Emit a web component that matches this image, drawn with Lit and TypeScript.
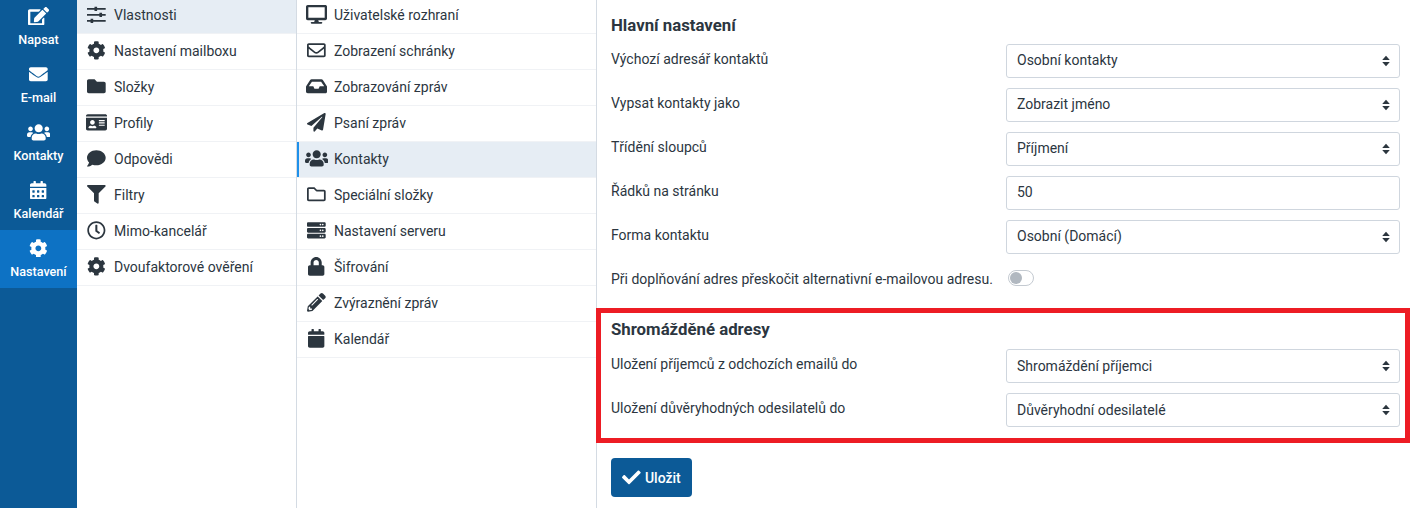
import { LitElement, html, css, svg } from "lit";
import { customElement } from "lit/decorators.js";

type Ic = { w: number; d: string };
const I: Record<string, Ic> = {
  edit: { w: 576, d: "M402.6 83.2l90.2 90.2c3.8 3.8 3.8 10 0 13.8L274.4 405.6l-92.8 10.3c-12.4 1.4-22.9-9.1-21.5-21.5l10.3-92.8L388.8 83.2c3.8-3.8 10-3.8 13.8 0zm162-22.9l-48.8-48.8c-15.2-15.2-39.9-15.2-55.2 0l-35.4 35.4c-3.8 3.8-3.8 10 0 13.8l90.2 90.2c3.8 3.8 10 3.8 13.8 0l35.4-35.4c15.2-15.3 15.2-40 0-55.2zM384 346.2V448H64V128h229.8c3.2 0 6.2-1.3 8.5-3.5l40-40c7.6-7.6 2.2-20.5-8.5-20.5H48C21.5 64 0 85.5 0 112v352c0 26.5 21.5 48 48 48h352c26.5 0 48-21.5 48-48V306.2c0-10.7-12.9-16-20.5-8.5l-40 40c-2.2 2.3-3.5 5.3-3.5 8.5z" },
  envelope: { w: 512, d: "M502.3 190.8c3.9-3.1 9.7-.2 9.7 4.7V400c0 26.5-21.5 48-48 48H48c-26.5 0-48-21.5-48-48V195.6c0-5 5.7-7.8 9.7-4.7 22.4 17.4 52.1 39.5 154.1 113.6 21.1 15.4 56.7 47.8 92.2 47.6 35.7.3 72-32.8 92.3-47.6 102-74.1 131.6-96.3 154-113.7zM256 320c23.2.4 56.6-29.2 73.4-41.4 132.7-96.3 142.8-104.7 173.4-128.7 5.8-4.5 9.2-11.5 9.2-18.9v-19c0-26.5-21.5-48-48-48H48C21.5 64 0 85.5 0 112v19c0 7.4 3.4 14.3 9.2 18.9 30.6 23.9 40.7 32.4 173.4 128.7 16.8 12.2 50.2 41.8 73.4 41.4z" },
  users: { w: 640, d: "M96 224c35.3 0 64-28.7 64-64s-28.7-64-64-64-64 28.7-64 64 28.7 64 64 64zm448 0c35.3 0 64-28.7 64-64s-28.7-64-64-64-64 28.7-64 64 28.7 64 64 64zm32 32h-64c-17.6 0-33.5 7.1-45.1 18.6 40.3 22.1 68.9 62 75.1 109.4h66c17.7 0 32-14.3 32-32v-32c0-35.3-28.7-64-64-64zm-256 0c61.9 0 112-50.1 112-112S381.9 32 320 32 208 82.1 208 144s50.1 112 112 112zm76.8 32h-8.3c-20.8 10-43.9 16-68.5 16s-47.6-6-68.5-16h-8.3C179.6 288 128 339.6 128 403.2V432c0 26.5 21.5 48 48 48h288c26.5 0 48-21.5 48-48v-28.8c0-63.6-51.6-115.2-115.2-115.2zm-223.7-13.4C161.5 263.1 145.6 256 128 256H64c-35.3 0-64 28.7-64 64v32c0 17.7 14.3 32 32 32h65.9c6.3-47.4 34.9-87.3 75.2-109.4z" },
  calAlt: { w: 448, d: "M0 464c0 26.5 21.5 48 48 48h352c26.5 0 48-21.5 48-48V192H0v272zm320-196c0-6.6 5.4-12 12-12h40c6.6 0 12 5.4 12 12v40c0 6.6-5.4 12-12 12h-40c-6.6 0-12-5.4-12-12v-40zm0 128c0-6.6 5.4-12 12-12h40c6.6 0 12 5.4 12 12v40c0 6.6-5.4 12-12 12h-40c-6.6 0-12-5.4-12-12v-40zM192 268c0-6.6 5.4-12 12-12h40c6.6 0 12 5.4 12 12v40c0 6.6-5.4 12-12 12h-40c-6.6 0-12-5.4-12-12v-40zm0 128c0-6.6 5.4-12 12-12h40c6.6 0 12 5.4 12 12v40c0 6.6-5.4 12-12 12h-40c-6.6 0-12-5.4-12-12v-40zM64 268c0-6.6 5.4-12 12-12h40c6.6 0 12 5.4 12 12v40c0 6.6-5.4 12-12 12H76c-6.6 0-12-5.4-12-12v-40zm0 128c0-6.6 5.4-12 12-12h40c6.6 0 12 5.4 12 12v40c0 6.6-5.4 12-12 12H76c-6.6 0-12-5.4-12-12v-40zM400 64h-48V16c0-8.8-7.2-16-16-16h-32c-8.8 0-16 7.2-16 16v48H160V16c0-8.8-7.2-16-16-16h-32c-8.8 0-16 7.2-16 16v48H48C21.5 64 0 85.5 0 112v48h448v-48c0-26.5-21.5-48-48-48z" },
  cog: { w: 512, d: "M487.4 315.7l-42.6-24.6c4.3-23.2 4.3-47 0-70.2l42.6-24.6c4.9-2.8 7.1-8.6 5.5-14-11.1-35.6-30-67.8-54.7-94.6-3.8-4.1-10-5.1-14.8-2.3L380.8 110c-17.9-15.4-38.5-27.3-60.8-35.1V25.8c0-5.6-3.9-10.5-9.4-11.7-36.7-8.2-74.3-7.8-109.2 0-5.5 1.2-9.4 6.1-9.4 11.7V75c-22.2 7.9-42.8 19.8-60.8 35.1L88.7 85.5c-4.9-2.8-11-1.9-14.8 2.3-24.7 26.7-43.6 58.9-54.7 94.6-1.7 5.4.6 11.2 5.5 14L67.3 221c-4.3 23.2-4.3 47 0 70.2l-42.6 24.6c-4.9 2.8-7.1 8.6-5.5 14 11.1 35.6 30 67.8 54.7 94.6 3.8 4.1 10 5.1 14.8 2.3l42.6-24.6c17.9 15.4 38.5 27.3 60.8 35.1v49.2c0 5.6 3.9 10.5 9.4 11.7 36.7 8.2 74.3 7.8 109.2 0 5.5-1.2 9.4-6.1 9.4-11.7v-49.2c22.2-7.9 42.8-19.8 60.8-35.1l42.6 24.6c4.9 2.8 11 1.9 14.8-2.3 24.7-26.7 43.6-58.9 54.7-94.6 1.5-5.5-.7-11.3-5.6-14.1zM256 336c-44.1 0-80-35.9-80-80s35.9-80 80-80 80 35.9 80 80-35.9 80-80 80z" },
  sliders: { w: 512, d: "M0 80h512v50H0zM0 245h512v50H0zM0 409h512v50H0zM205 50h72v112h-72zM340 214h72v112h-72zM98 378h72v112H98z" },
  folder: { w: 512, d: "M464 128H272l-64-64H48C21.49 64 0 85.49 0 112v288c0 26.51 21.49 48 48 48h416c26.51 0 48-21.49 48-48V176c0-26.51-21.49-48-48-48z" },
  idCard: { w: 576, d: "M528 32H48C21.5 32 0 53.5 0 80v16h576V80c0-26.5-21.5-48-48-48zM0 432c0 26.5 21.5 48 48 48h480c26.5 0 48-21.5 48-48V128H0v304zm352-232c0-4.4 3.6-8 8-8h144c4.4 0 8 3.6 8 8v16c0 4.4-3.6 8-8 8H360c-4.4 0-8-3.6-8-8v-16zm0 64c0-4.4 3.6-8 8-8h144c4.4 0 8 3.6 8 8v16c0 4.4-3.6 8-8 8H360c-4.4 0-8-3.6-8-8v-16zm0 64c0-4.4 3.6-8 8-8h144c4.4 0 8 3.6 8 8v16c0 4.4-3.6 8-8 8H360c-4.4 0-8-3.6-8-8v-16zM176 192c35.3 0 64 28.7 64 64s-28.7 64-64 64-64-28.7-64-64 28.7-64 64-64zM67.1 396.2C75.5 370.5 99.6 352 128 352h8.2c12.3 5.1 25.7 8 39.8 8s27.6-2.9 39.8-8h8.2c28.4 0 52.5 18.5 60.9 44.2 3.2 9.9-5.2 19.8-15.6 19.8H82.7c-10.4 0-18.8-10-15.6-19.8z" },
  comment: { w: 512, d: "M256 32C114.6 32 0 125.1 0 240c0 49.6 21.4 95 57 130.7C44.5 421.1 2.7 466 2.2 466.5c-2.2 2.3-2.8 5.7-1.5 8.7S4.8 480 8 480c66.3 0 116-31.8 140.6-51.4 32.7 12.3 69 19.4 107.4 19.4 141.4 0 256-93.1 256-208S397.4 32 256 32z" },
  filter: { w: 512, d: "M487.976 0H24.028C2.71 0-8.047 25.866 7.058 40.971L192 225.941V432c0 7.831 3.821 15.17 10.237 19.662l80 55.98C298.02 518.69 320 507.493 320 487.98V225.941l184.947-184.97C520.021 25.896 509.338 0 487.976 0z" },
  clock: { w: 512, d: "M256 8C119 8 8 119 8 256s111 248 248 248 248-111 248-248S393 8 256 8zm0 448c-110.5 0-200-89.5-200-200S145.5 56 256 56s200 89.5 200 200-89.5 200-200 200zm61.8-104.4l-84.9-61.7c-3.1-2.3-4.9-5.9-4.9-9.7V116c0-6.6 5.4-12 12-12h32c6.6 0 12 5.4 12 12v141.7l66.8 48.6c5.4 3.9 6.5 11.4 2.6 16.8L334.6 349c-3.9 5.3-11.4 6.5-16.8 2.6z" },
  desktop: { w: 576, d: "M528 0H48C21.5 0 0 21.5 0 48v320c0 26.5 21.5 48 48 48h192l-16 48h-72c-13.3 0-24 10.7-24 24s10.7 24 24 24h272c13.3 0 24-10.7 24-24s-10.7-24-24-24h-72l-16-48h192c26.5 0 48-21.5 48-48V48c0-26.5-21.5-48-48-48zm-16 352H64V64h448v288z" },
  envReg: { w: 512, d: "M464 64H48C21.49 64 0 85.49 0 112v288c0 26.51 21.49 48 48 48h416c26.51 0 48-21.49 48-48V112c0-26.51-21.49-48-48-48zm0 48v40.805c-22.422 18.259-58.168 46.651-134.587 106.49-16.841 13.247-50.201 45.072-73.413 44.701-23.208.375-56.579-31.459-73.413-44.701C106.18 199.465 70.425 171.067 48 152.805V112h416zM48 400V214.398c22.914 18.251 55.409 43.862 104.938 82.646 21.857 17.205 60.134 55.186 103.062 54.955 42.717.231 80.509-37.199 103.053-54.947 49.528-38.783 82.032-64.401 104.947-82.653V400H48z" },
  inbox: { w: 576, d: "M567.938 243.908L462.25 85.374A48.003 48.003 0 0 0 422.311 64H153.689a48 48 0 0 0-39.938 21.374L8.062 243.908A47.994 47.994 0 0 0 0 270.533V400c0 26.51 21.49 48 48 48h480c26.51 0 48-21.49 48-48V270.533a47.994 47.994 0 0 0-8.062-26.625zM162.252 128h251.497l85.333 128H376l-32 64H232l-32-64H76.918l85.334-128z" },
  plane: { w: 512, d: "M476 3.2L12.5 270.6c-18.1 10.4-15.8 35.6 2.2 43.2L121 358.4l287.3-253.2c5.5-4.9 13.3 2.6 8.6 8.3L176 407v80.5c0 23.6 28.5 32.9 42.5 15.8L282 426l124.6 52.2c14.2 6 30.4-2.9 33-18.2l72-432C515 7.8 493.3-6.8 476 3.2z" },
  folderReg: { w: 512, d: "M464 128H272l-54.63-54.63c-6-6-14.14-9.37-22.63-9.37H48C21.49 64 0 85.49 0 112v288c0 26.51 21.49 48 48 48h416c26.51 0 48-21.49 48-48V176c0-26.51-21.49-48-48-48zm0 272H48V112h140.12l54.63 54.63c6 6 14.14 9.37 22.63 9.37H464v224z" },
  server: { w: 512, d: "M480 160H32c-17.673 0-32-14.327-32-32V64c0-17.673 14.327-32 32-32h448c17.673 0 32 14.327 32 32v64c0 17.673-14.327 32-32 32zm-48-88c-13.255 0-24 10.745-24 24s10.745 24 24 24 24-10.745 24-24-10.745-24-24-24zm-64 0c-13.255 0-24 10.745-24 24s10.745 24 24 24 24-10.745 24-24-10.745-24-24-24zm112 248H32c-17.673 0-32-14.327-32-32v-64c0-17.673 14.327-32 32-32h448c17.673 0 32 14.327 32 32v64c0 17.673-14.327 32-32 32zm-48-88c-13.255 0-24 10.745-24 24s10.745 24 24 24 24-10.745 24-24-10.745-24-24-24zm-64 0c-13.255 0-24 10.745-24 24s10.745 24 24 24 24-10.745 24-24-10.745-24-24-24zm112 248H32c-17.673 0-32-14.327-32-32v-64c0-17.673 14.327-32 32-32h448c17.673 0 32 14.327 32 32v64c0 17.673-14.327 32-32 32zm-48-88c-13.255 0-24 10.745-24 24s10.745 24 24 24 24-10.745 24-24-10.745-24-24-24zm-64 0c-13.255 0-24 10.745-24 24s10.745 24 24 24 24-10.745 24-24-10.745-24-24-24z" },
  lock: { w: 448, d: "M400 224h-24v-72C376 68.2 307.8 0 224 0S72 68.2 72 152v72H48c-26.5 0-48 21.5-48 48v192c0 26.5 21.5 48 48 48h352c26.5 0 48-21.5 48-48V272c0-26.5-21.5-48-48-48zm-104 0H152v-72c0-39.7 32.3-72 72-72s72 32.3 72 72v72z" },
  pencil: { w: 512, d: "M497.9 142.1l-46.1 46.1c-4.7 4.7-12.3 4.7-17 0l-111-111c-4.7-4.7-4.7-12.3 0-17l46.1-46.1c18.7-18.7 49.1-18.7 67.9 0l60.1 60.1c18.8 18.7 18.8 49.1 0 67.9zM284.2 99.8L21.6 362.4.4 483.9c-2.9 16.4 11.4 30.6 27.8 27.8l121.5-21.3 262.6-262.6c4.7-4.7 4.7-12.3 0-17l-111-111c-4.8-4.7-12.4-4.7-17.1 0zM124.1 339.9c-5.5-5.5-5.5-14.3 0-19.8l154-154c5.5-5.5 14.3-5.5 19.8 0s5.5 14.3 0 19.8l-154 154c-5.5 5.5-14.3 5.5-19.8 0zM88 424h48v36.3l-64.5 11.3-31.1-31.1L51.7 376H88v48z" },
  calendar: { w: 448, d: "M12 192h424c6.6 0 12 5.4 12 12v260c0 26.5-21.5 48-48 48H48c-26.5 0-48-21.5-48-48V204c0-6.6 5.4-12 12-12zm436-44v-36c0-26.5-21.5-48-48-48h-48V12c0-6.6-5.4-12-12-12h-40c-6.6 0-12 5.4-12 12v52H160V12c0-6.6-5.4-12-12-12h-40c-6.6 0-12 5.4-12 12v52H48C21.5 64 0 85.5 0 112v36c0 6.6 5.4 12 12 12h424c6.6 0 12-5.4 12-12z" },
  check: { w: 512, d: "M173.898 439.404l-166.4-166.4c-9.997-9.997-9.997-26.206 0-36.204l36.203-36.204c9.997-9.998 26.207-9.998 36.204 0L192 312.69 432.095 72.596c9.997-9.997 26.207-9.997 36.204 0l36.203 36.204c9.997 9.997 9.997 26.206 0 36.204l-294.4 294.401c-9.998 9.997-26.207 9.997-36.204-.001z" },
};

const SIZE = 18.7;
const icon = (n: string) => {
  const ic = I[n];
  return html`<svg class="ic" width=${(SIZE * ic.w) / 512} height=${SIZE} viewBox="0 0 ${ic.w} 512" fill="currentColor">${svg`<path d=${ic.d}></path>`}</svg>`;
};

const rail: [string, string, boolean?][] = [
  ["edit", "Napsat"], ["envelope", "E-mail"], ["users", "Kontakty"], ["calAlt", "Kalendář"], ["cog", "Nastavení", true],
];
const sections: [string, string, boolean?][] = [
  ["sliders", "Vlastnosti", true], ["cog", "Nastavení mailboxu"], ["folder", "Složky"], ["idCard", "Profily"],
  ["comment", "Odpovědi"], ["filter", "Filtry"], ["clock", "Mimo-kancelář"], ["cog", "Dvoufaktorové ověření"],
];
const prefs: [string, string, boolean?][] = [
  ["desktop", "Uživatelské rozhraní"], ["envReg", "Zobrazení schránky"], ["inbox", "Zobrazování zpráv"], ["plane", "Psaní zpráv"],
  ["users", "Kontakty", true], ["folderReg", "Speciální složky"], ["server", "Nastavení serveru"], ["lock", "Šifrování"],
  ["pencil", "Zvýraznění zpráv"], ["calendar", "Kalendář"],
];

@customElement("app-root")
export class AppRoot extends LitElement {
  static styles = css`
    :host { display: block; width: 1410px; height: 508px; overflow: hidden; position: relative; background: #fff; font-family: Roboto, "Noto Sans", sans-serif; font-size: 14px; color: #2c363f; }
    * { box-sizing: border-box; }
    .app { display: grid; grid-template-columns: 77px 220px 300px 1fr; height: 508px; }
    .ic { display: block; flex: none; }
    .rail { background: #0c5a97; color: #fff; overflow: hidden; }
    .rail-list { margin-top: -2px; }
    .rail-item { height: 58px; display: flex; flex-direction: column; align-items: center; padding-top: 9px; }
    .rail-item.on { background: #0d72c4; }
    .rail-icon { height: 18px; display: flex; align-items: center; justify-content: center; }
    .rail-label { font-size: 12.6px; font-weight: 500; line-height: 16px; margin-top: 7px; white-space: nowrap; }
    .col { overflow: hidden; border-right: 1px solid #d4dbe3; }
    .list { margin-top: -2px; }
    .row { height: 36px; border-bottom: 1px solid #f0f2f5; display: flex; align-items: center; padding: 0 0 2px 9.5px; }
    .row.on { background: #e6edf4; }
    .prefs .row.on { box-shadow: inset 2px 0 0 #1e90ea; }
    .row-icon { width: 20px; height: 18px; margin-right: 7.5px; display: flex; align-items: center; justify-content: center; }
    .main { padding: 16px 10px 0 14px; }
    h2 { margin: 0; font-size: 16.8px; line-height: 18px; font-weight: 700; }
    .form { display: grid; grid-template-columns: 395px 394px; row-gap: 10px; }
    .sec1 .form { margin-top: 10px; }
    .sec2 { margin-top: 26px; }
    .sec2 .form { margin-top: 11px; }
    .lbl { line-height: 20px; padding-top: 5px; height: 34px; white-space: nowrap; }
    .ctl { height: 34px; border: 1px solid #cfd6de; border-radius: 3px; display: flex; align-items: center; justify-content: space-between; padding: 0 10px; background: #fff; line-height: 20px; }
    .ctl span { padding-bottom: 2px; }
    .sec2 .ctl span { padding-bottom: 0; }
    .arrows { display: block; flex: none; margin-right: -1px; }
    .lbl-tog { padding-top: 0; display: flex; align-items: center; height: 30px; }
    .tog-cell { display: flex; align-items: flex-start; padding-top: 6px; height: 30px; }
    .toggle { margin-left: 2px; width: 26px; height: 16px; border-radius: 8px; border: 1px solid #c4cad1; padding: 1px; background: #fff; }
    .toggle i { display: block; width: 12px; height: 12px; border-radius: 50%; background: #b1b8c0; }
    .btn { margin-top: 31px; width: 81px; height: 39px; background: #0c5a97; color: #fff; border-radius: 4px; display: flex; align-items: center; justify-content: center; gap: 4px; font-weight: 500; }
    .mark { position: absolute; left: 596px; top: 308px; width: 814px; height: 135px; border: 5px solid #ed1c24; pointer-events: none; }
  `;

  private sel(v: string) {
    return html`<div class="ctl"><span>${v}</span>
      <svg class="arrows" width="8" height="12" viewBox="0 0 8 12" fill="#2c363f"><path d="M4 .8 7.8 5H.2zM4 11.2.2 7h7.6z"></path></svg></div>`;
  }
  private rows(items: [string, string, boolean?][]) {
    return html`<div class="list">${items.map(([i, t, on]) => html`<div class="row ${on ? "on" : ""}"><span class="row-icon">${icon(i)}</span><span>${t}</span></div>`)}</div>`;
  }
  render() {
    return html`<div class="app">
      <nav class="rail"><div class="rail-list">
        ${rail.map(([i, t, on]) => html`<div class="rail-item ${on ? "on" : ""}"><span class="rail-icon">${icon(i)}</span><span class="rail-label">${t}</span></div>`)}
      </div></nav>
      <div class="col">${this.rows(sections)}</div>
      <div class="col prefs">${this.rows(prefs)}</div>
      <main class="main">
        <section class="sec1">
          <h2>Hlavní nastavení</h2>
          <div class="form">
            <div class="lbl">Výchozí adresář kontaktů</div>${this.sel("Osobní kontakty")}
            <div class="lbl">Vypsat kontakty jako</div>${this.sel("Zobrazit jméno")}
            <div class="lbl">Třídění sloupců</div>${this.sel("Příjmení")}
            <div class="lbl">Řádků na stránku</div><div class="ctl"><span>50</span></div>
            <div class="lbl">Forma kontaktu</div>${this.sel("Osobní (Domácí)")}
            <div class="lbl lbl-tog">Při doplňování adres přeskočit alternativní e-mailovou adresu.</div>
            <div class="tog-cell"><div class="toggle"><i></i></div></div>
          </div>
        </section>
        <section class="sec2">
          <h2>Shromážděné adresy</h2>
          <div class="form">
            <div class="lbl">Uložení příjemců z odchozích emailů do</div>${this.sel("Shromáždění příjemci")}
            <div class="lbl">Uložení důvěryhodných odesilatelů do</div>${this.sel("Důvěryhodní odesilatelé")}
          </div>
        </section>
        <div class="btn">${icon("check")}<span>Uložit</span></div>
      </main>
      </div>
      <div class="mark"></div>`;
  }
}
